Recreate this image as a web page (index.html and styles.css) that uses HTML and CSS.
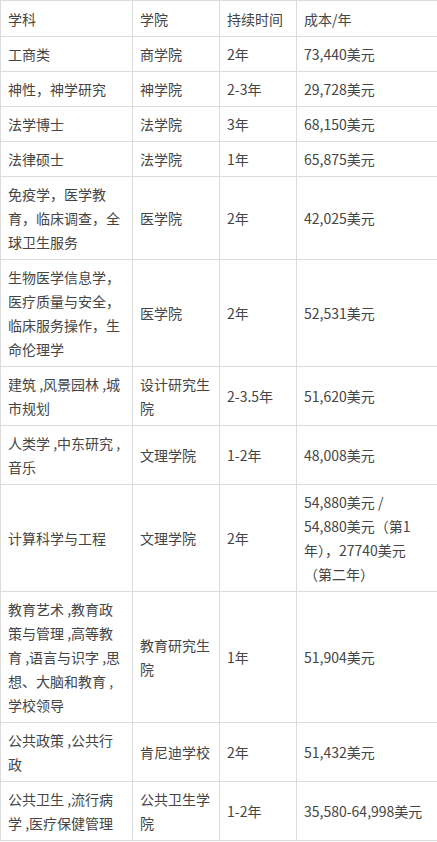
FILE: index.html
```html
<!DOCTYPE html>
<html lang="zh-CN">
<head>
<meta charset="utf-8">
<title>费用表</title>
<link rel="stylesheet" href="styles.css">
</head>
<body>
<table class="cost-table">
  <colgroup>
    <col class="c1"><col class="c2"><col class="c3"><col class="c4">
  </colgroup>
  <tr class="head"><td>学科</td><td>学院</td><td>持续时间</td><td>成本/年</td></tr>
  <tr><td>工商类</td><td>商学院</td><td>2年</td><td>73,440美元</td></tr>
  <tr><td>神性，神学研究</td><td>神学院</td><td>2-3年</td><td>29,728美元</td></tr>
  <tr><td>法学博士</td><td>法学院</td><td>3年</td><td>68,150美元</td></tr>
  <tr><td>法律硕士</td><td>法学院</td><td>1年</td><td>65,875美元</td></tr>
  <tr><td>免疫学，医学教<br>育，临床调查，全<br>球卫生服务</td><td>医学院</td><td>2年</td><td>42,025美元</td></tr>
  <tr><td>生物医学信息学，<br>医疗质量与安全，<br>临床服务操作，生<br>命伦理学</td><td>医学院</td><td>2年</td><td>52,531美元</td></tr>
  <tr><td>建筑 ,风景园林 ,城<br>市规划</td><td>设计研究生<br>院</td><td>2-3.5年</td><td>51,620美元</td></tr>
  <tr><td>人类学 ,中东研究 ,<br>音乐</td><td>文理学院</td><td>1-2年</td><td>48,008美元</td></tr>
  <tr><td>计算科学与工程</td><td>文理学院</td><td>2年</td><td>54,880美元 /<br>54,880美元（第1<br>年），27740美元<br>（第二年）</td></tr>
  <tr><td>教育艺术 ,教育政<br>策与管理 ,高等教<br>育 ,语言与识字 ,思<br>想、大脑和教育 ,<br>学校领导</td><td>教育研究生<br>院</td><td>1年</td><td>51,904美元</td></tr>
  <tr><td>公共政策 ,公共行<br>政</td><td>肯尼迪学校</td><td>2年</td><td>51,432美元</td></tr>
  <tr><td>公共卫生 ,流行病<br>学 ,医疗保健管理</td><td>公共卫生学<br>院</td><td>1-2年</td><td>35,580-64,998美元</td></tr>
</table>
</body>
</html>
```
FILE: styles.css
```css
html, body {
  margin: 0;
  padding: 0;
  background: #ffffff;
}
.cost-table {
  width: 437px;
  border-collapse: collapse;
  table-layout: fixed;
  font-family: "Noto Sans CJK SC", "Noto Sans", sans-serif;
  font-size: 14px;
  color: #454545;
}
.c1 { width: 132px; }
.c2 { width: 87px; }
.c3 { width: 77px; }
.c4 { width: 141px; }
.cost-table td {
  border: 1px solid #dcdcdc;
  padding: 5px 6px 5px 7px;
  line-height: 24px;
  vertical-align: middle;
  white-space: nowrap;
  overflow: hidden;
}
.cost-table .head td {
  padding-top: 6px;
}
```
